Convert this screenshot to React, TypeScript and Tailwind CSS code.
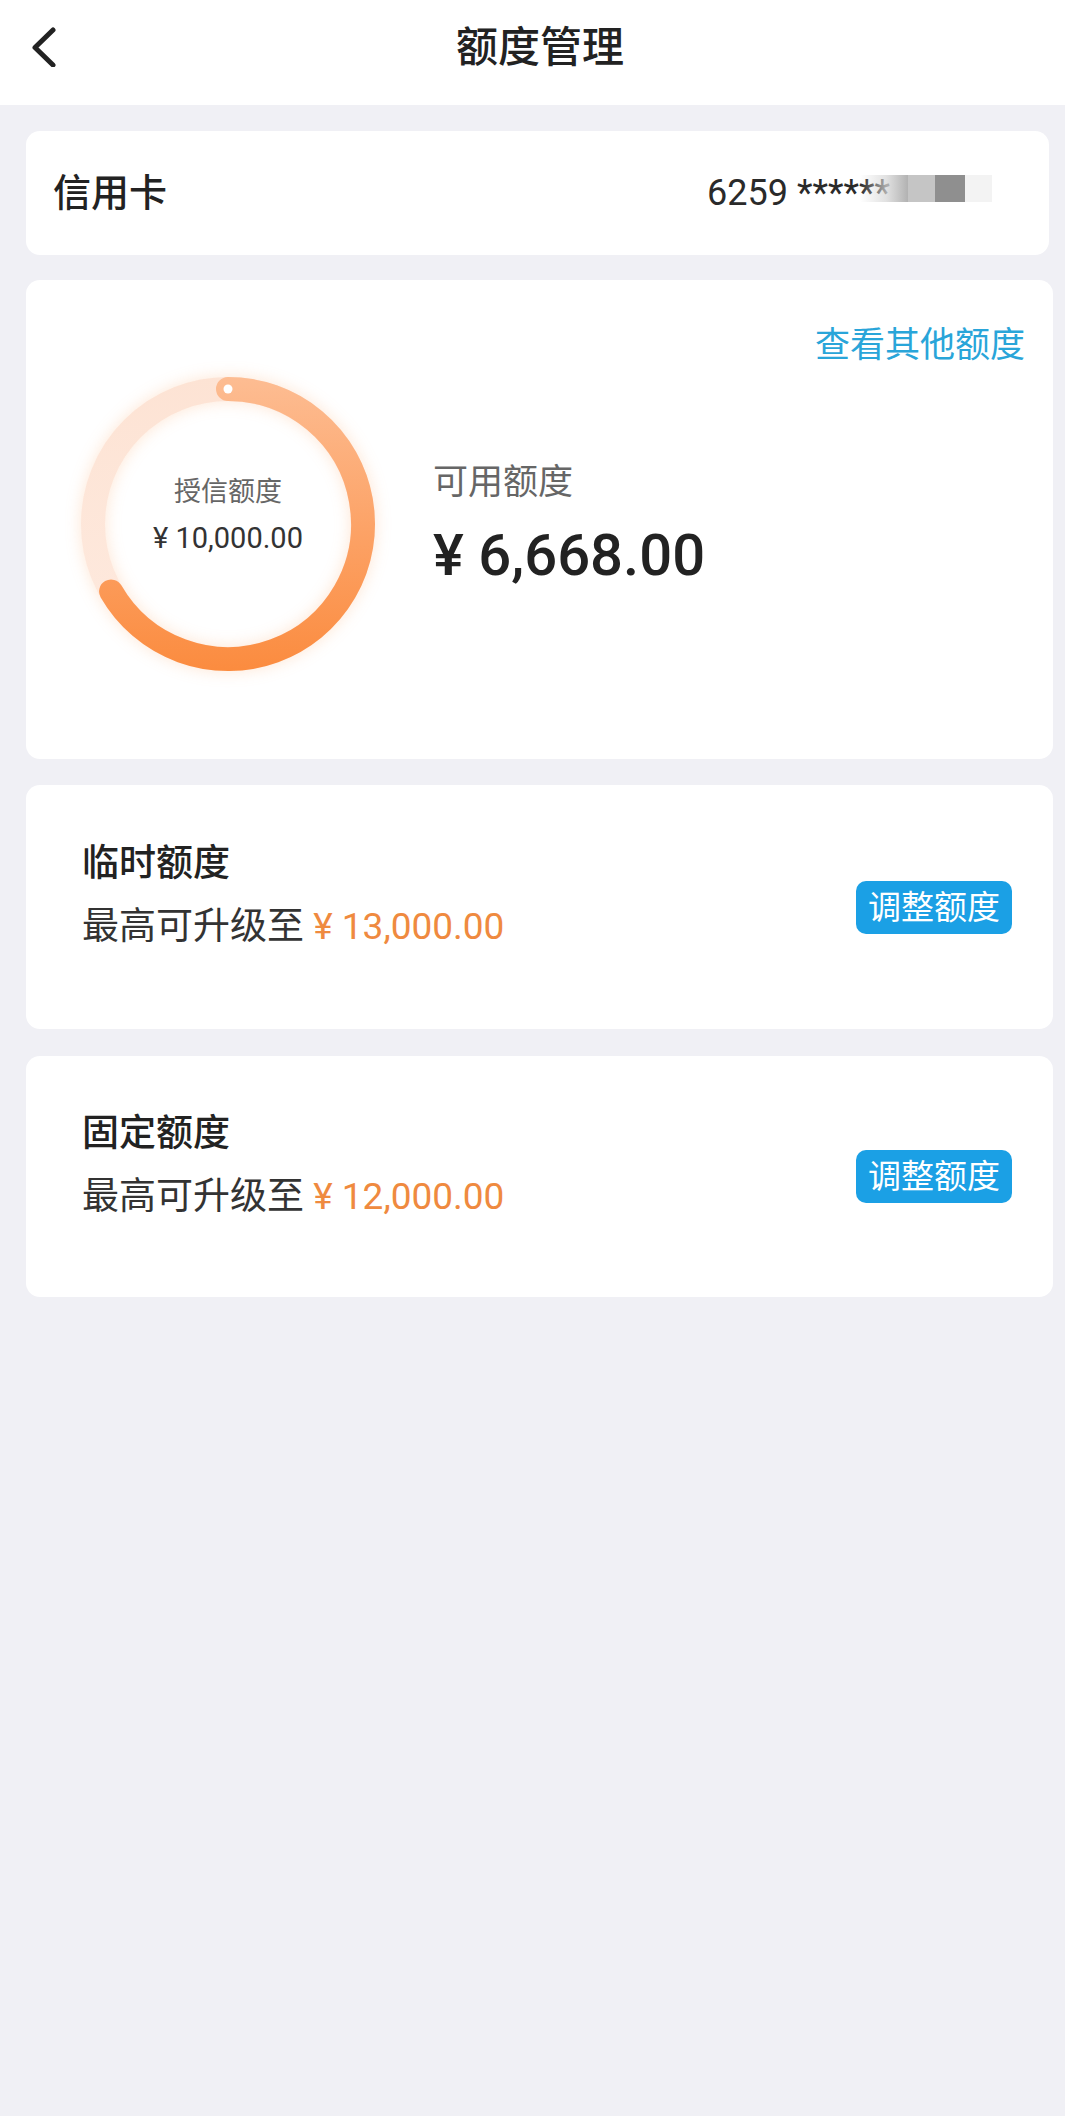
import React from "react";

function Ring() {
  return (
    <div className="relative w-[300px] h-[300px] shrink-0">
      <svg
        width="300"
        height="300"
        viewBox="0 0 300 300"
        className="drop-shadow-[0_0_8px_rgba(251,140,60,0.22)]"
      >
        <defs>
          <linearGradient id="arcGrad" x1="0" y1="0" x2="0" y2="300" gradientUnits="userSpaceOnUse">
            <stop offset="0%" stopColor="#fdbd93" />
            <stop offset="55%" stopColor="#fca164" />
            <stop offset="100%" stopColor="#fb8b3e" />
          </linearGradient>
          <linearGradient id="trackGrad" x1="0" y1="0" x2="0" y2="300" gradientUnits="userSpaceOnUse">
            <stop offset="0%" stopColor="#fde3d4" />
            <stop offset="100%" stopColor="#feeadf" />
          </linearGradient>
        </defs>
        <circle cx="150" cy="150" r="135" fill="none" stroke="url(#trackGrad)" strokeWidth="24" />
        <path
          d="M150 15 A135 135 0 1 1 33.09 217.5"
          fill="none"
          stroke="url(#arcGrad)"
          strokeWidth="24"
          strokeLinecap="round"
        />
        <circle cx="150" cy="15" r="4.5" fill="#ffffff" />
      </svg>
      <div className="absolute inset-0 flex flex-col items-center justify-center pb-[18px]">
        <span className="text-[27px] leading-[36px] text-[#666666]">授信额度</span>
        <span className="mt-[10px] text-[29px] leading-[36px] text-[#333333]">¥ 10,000.00</span>
      </div>
    </div>
  );
}

function QuotaCard({
  title,
  amount,
  className,
}: {
  title: string;
  amount: string;
  className: string;
}) {
  return (
    <div
      className={
        "ml-[26px] mr-[12px] rounded-[14px] bg-white flex items-center justify-between pl-[56px] pr-[41px] " +
        className
      }
    >
      <div className="flex flex-col mb-[24px]">
        <span className="text-[37px] leading-[63px] font-medium text-[#222222]">{title}</span>
        <span className="text-[37px] leading-[63px] text-[#333333]">
          最高可升级至 <span className="text-[#ef8a3f]">¥ {amount}</span>
        </span>
      </div>
      <button className="w-[156px] h-[53px] rounded-[10px] bg-[#1ba0e5] text-white text-[33px] leading-none flex items-center justify-center">
        调整额度
      </button>
    </div>
  );
}

export default function App() {
  return (
    <div className="min-h-[2116px] w-full bg-[#f0f0f5] font-['Roboto','Noto_Sans_CJK_SC',sans-serif]">
      {/* Header */}
      <div className="h-[105px] bg-white grid grid-cols-[1fr_auto_1fr] items-start">
        <div className="pl-[30px] pt-[27px]">
          <svg width="28" height="40" viewBox="0 0 28 40">
            <polyline
              points="23,3 5,20.5 23,38"
              fill="none"
              stroke="#222222"
              strokeWidth="5"
              strokeLinecap="round"
              strokeLinejoin="round"
            />
          </svg>
        </div>
        <div className="pt-[20px] pl-[15px] text-[42px] leading-[56px] font-medium text-[#222222]">
          额度管理
        </div>
        <div />
      </div>

      {/* Card 1 */}
      <div className="mt-[26px] ml-[26px] mr-[16px] h-[124px] rounded-[14px] bg-white flex items-center justify-between pl-[27px] pr-[57px]">
        <span className="text-[38px] leading-none font-medium text-[#222222]">信用卡</span>
        <div className="flex items-center">
          <span className="text-[36px] leading-[40px] text-[#2a2a2a] whitespace-pre">6259 ******</span>
          <div className="flex h-[27px] -mt-[10px] -ml-[30px]">
            <div className="w-[48px] h-full bg-[linear-gradient(to_right,rgba(235,235,235,0)_0%,rgba(215,215,215,0.75)_55%,#b2b2b2_100%)]" />
            <div className="w-[27px] h-full bg-[#c5c5c5]" />
            <div className="w-[30px] h-full bg-[#8f8f8f]" />
            <div className="w-[27px] h-full bg-[#f3f3f3]" />
          </div>
        </div>
      </div>

      {/* Card 2 */}
      <div className="mt-[25px] ml-[26px] mr-[12px] h-[479px] rounded-[14px] bg-white flex flex-col">
        <div className="flex justify-end pt-[42px] pr-[28px]">
          <span className="text-[35px] leading-[48px] text-[#29a5d9]">查看其他额度</span>
        </div>
        <div className="flex items-center mt-[4px] pl-[52px]">
          <Ring />
          <div className="ml-[55px] flex flex-col">
            <span className="text-[35px] leading-[48px] text-[#666666]">可用额度</span>
            <span className="mt-[13px] text-[58px] leading-[70px] font-medium text-[#222222]">¥ 6,668.00</span>
          </div>
        </div>
      </div>

      {/* Card 3 */}
      <QuotaCard title="临时额度" amount="13,000.00" className="mt-[26px] h-[244px]" />

      {/* Card 4 */}
      <QuotaCard title="固定额度" amount="12,000.00" className="mt-[27px] h-[241px]" />
    </div>
  );
}
